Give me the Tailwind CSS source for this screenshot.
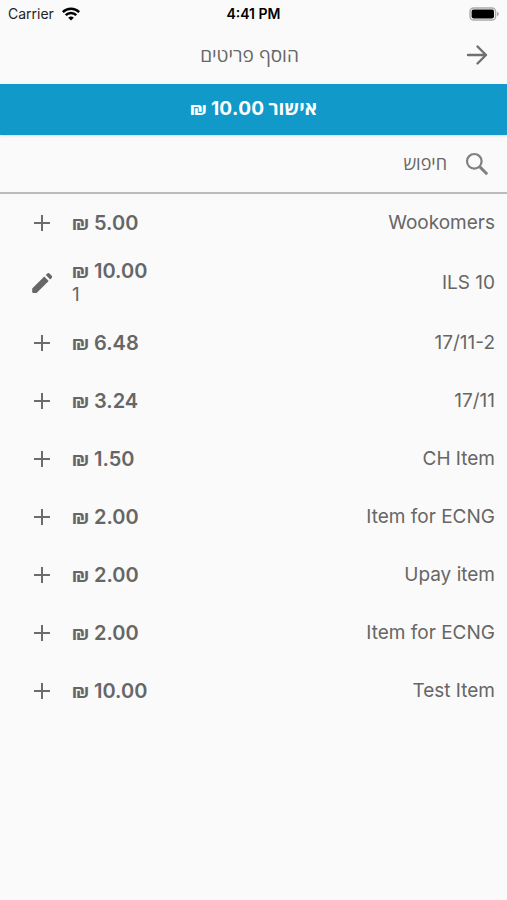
<!DOCTYPE html>
<html lang="he" dir="rtl">
<head>
  <meta charset="UTF-8" />
  <meta name="viewport" content="width=device-width, initial-scale=1.0" />
  <title>הוסף פריטים</title>
  <script src="https://cdn.jsdelivr.net/npm/@tailwindcss/browser@4"></script>
</head>

<body class="bg-[#fafafa] min-h-screen text-[#666] font-['Inter','Open_Sans',sans-serif]">

  <!-- status bar -->
  <div dir="ltr" class="grid grid-cols-3 items-center h-7 px-2 text-sm text-black">
    <div class="flex items-center gap-2 text-[#222]">
      <span>Carrier</span>
      <svg class="w-[18px] h-[14px]" viewBox="0 0 18 14" fill="none" stroke="#000" stroke-width="2.5">
        <path d="M.8 5.1a11.6 11.6 0 0 1 16.4 0M3.7 8.2a7.5 7.5 0 0 1 10.6 0" />
        <path d="M9 13.6 6.2 10.8a4 4 0 0 1 5.6 0z" fill="#000" stroke="none" />
      </svg>
    </div>
    <span class="text-center font-semibold">4:41 PM</span>
    <svg class="w-[30px] h-[14px] justify-self-end" viewBox="0 0 30 14">
      <rect x="1" y="1" width="25.6" height="12" rx="3.6" fill="#fafafa" stroke="#aaa" stroke-width="1.4" />
      <rect x="2.6" y="2.6" width="22.4" height="8.8" rx="1.8" fill="#000" />
      <path d="M28 4.8c2.4.8 2.4 3.6 0 4.4z" fill="#aaa" />
    </svg>
  </div>

  <header class="grid grid-cols-[40px_1fr_32px] items-center h-14 px-2.5">
    <button type="button" aria-label="חזרה" class="flex justify-center">
      <svg class="w-[30px] h-[30px]" viewBox="0 0 30 30" fill="none" stroke="#707070" stroke-width="2.4" stroke-linecap="round" stroke-linejoin="round">
        <path d="M6 14h18M15.5 5.5l8.5 8.5-8.5 8.5" />
      </svg>
    </button>
    <h1 class="text-center text-[19px]">הוסף פריטים</h1>
  </header>

  <button type="button" class="block w-full h-[51px] bg-[#1199c9] text-white text-[19px] font-bold shadow-sm">אישור 10.00 <span class="font-['Roboto']">₪</span></button>

  <label class="flex items-center gap-4 h-[59px] px-4 border-b-2 border-[#bbb]">
    <svg class="w-7 h-7 shrink-0" viewBox="0 0 28 28" fill="none" stroke="#808080" stroke-width="2.2">
      <circle cx="11.3" cy="11.3" r="7.3" />
      <path d="m16.6 16.6 7.6 7.6" stroke-width="3" />
    </svg>
    <input type="text" placeholder="חיפוש" aria-label="חיפוש" class="grow min-w-0 bg-transparent text-lg placeholder:text-[#666] focus:outline-none" />
  </label>

  <ul id="itemList"></ul>

  <script>
    const items = [
      { name: 'Wookomers', price: '5.00' },
      { name: 'ILS 10', price: '10.00', qty: 1 },
      { name: '17/11-2', price: '6.48' },
      { name: '17/11', price: '3.24' },
      { name: 'CH Item', price: '1.50' },
      { name: 'Item for ECNG', price: '2.00' },
      { name: 'Upay item', price: '2.00' },
      { name: 'Item for ECNG', price: '2.00' },
      { name: 'Test Item', price: '10.00' }
    ];

    const plusIcon = '<svg class="w-7 h-7" viewBox="0 0 28 28" stroke="#6c6c6c" stroke-width="2"><path d="M14 6v16M6 14h16" /></svg>';
    const editIcon = '<svg class="w-7 h-7" viewBox="0 0 28 28" fill="#666"><path d="M4.2 19.6 16.3 7.5l4.4 4.4L8.6 24H5.2a1 1 0 0 1-1-1zM17.8 6l1.5-1.5a1.6 1.6 0 0 1 2.2 0l2.2 2.2a1.6 1.6 0 0 1 0 2.2l-1.5 1.5z" /></svg>';

    document.getElementById('itemList').innerHTML = items.map(item => `
      <li dir="ltr" class="flex items-center min-h-[58px] py-[7px] pl-7 pr-3">
        <button type="button" aria-label="${item.qty ? 'עריכה' : 'הוספה'}" class="shrink-0">${item.qty ? editIcon : plusIcon}</button>
        <div class="ml-4 text-xl leading-6">
          <div class="font-semibold"><span class="font-['Roboto']">₪</span> ${item.price}</div>
          ${item.qty ? `<div class="text-[19px] leading-6">${item.qty}</div>` : ''}
        </div>
        <span class="ml-auto text-[19px]">${item.name}</span>
      </li>`).join('');
  </script>
</body>
</html>
